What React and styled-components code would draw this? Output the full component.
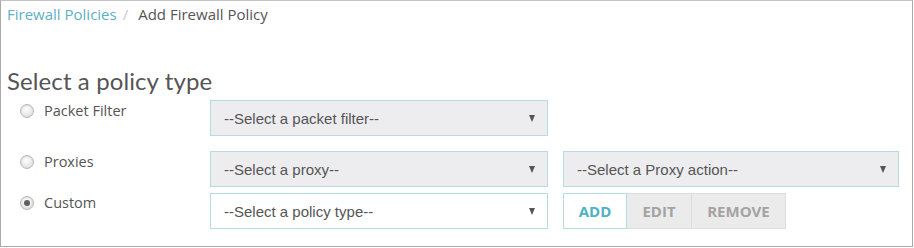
import styled, { createGlobalStyle } from 'styled-components'

const GlobalStyle = createGlobalStyle`
  html, body {
    margin: 0;
    background: #ffffff;
  }
  * {
    box-sizing: border-box;
  }
`

const Panel = styled.div`
  width: 913px;
  height: 247px;
  border: 1px solid #a9a9a9;
  border-top-color: #c4c4c4;
  padding: 3px 0 0 6px;
  background: #fff;
  font-family: 'Open Sans', 'Liberation Sans', sans-serif;
`

const Breadcrumb = styled.nav`
  display: flex;
  align-items: center;
  font-size: 15px;
  line-height: 21px;
  color: #555;
`

const Crumb = styled.a`
  color: #5eb0c4;
  text-decoration: none;
`

const Divider = styled.span`
  color: #c8c8c8;
  padding: 0 10px 0 6px;
`

const Heading = styled.h2`
  margin: 43px 0 0 0;
  font-family: 'Lato', 'Open Sans', sans-serif;
  font-weight: 400;
  font-size: 24px;
  line-height: 26px;
  color: #555;
  letter-spacing: 0.1px;
`

const Form = styled.div`
  display: flex;
  flex-direction: column;
  margin-top: 6px;
`

const Row = styled.div`
  display: grid;
  grid-template-columns: 188px 338px 336px;
  column-gap: 15px;
  margin-top: ${(p) => p.$gap || 0}px;
  height: 36px;
`

const Choice = styled.label`
  display: flex;
  align-items: center;
  gap: 10px;
  padding-left: 13px;
  height: 19px;
  margin-top: ${(p) => p.$offset ?? 1}px;
  font-size: 14.5px;
  color: #555;
`

const Radio = styled.span`
  position: relative;
  width: 14px;
  height: 14px;
  border-radius: 50%;
  border: 1px solid #b9b9b9;
  background: radial-gradient(circle at 45% 35%, #ffffff 0%, #e6e6e6 60%, #cfcfcf 100%);
  box-shadow: inset 0 1px 1px rgba(0, 0, 0, 0.08);
  &::after {
    content: '';
    display: ${(p) => (p.$checked ? 'block' : 'none')};
    position: absolute;
    top: 3px;
    left: 3px;
    width: 6px;
    height: 6px;
    border-radius: 50%;
    background: #5f5f5f;
  }
`

const Select = styled.div`
  display: flex;
  align-items: center;
  justify-content: space-between;
  height: 36px;
  padding: 0 12px 0 13px;
  border: 1px solid #b3dde3;
  background: ${(p) => (p.$light ? '#ffffff' : '#ededef')};
  font-family: 'Liberation Sans', Arial, sans-serif;
  font-size: 15px;
  color: #555;
`

const Caret = styled.span`
  width: 0;
  height: 0;
  border-left: 3.5px solid transparent;
  border-right: 3.5px solid transparent;
  border-top: 7px solid #555;
`

const ButtonGroup = styled.div`
  display: flex;
`

const Button = styled.button`
  width: ${(p) => p.$width}px;
  height: 36px;
  padding: 0;
  border: 1px solid ${(p) => (p.$active ? '#b3dde3' : '#dcdcdc')};
  border-left-width: ${(p) => (p.$first ? 1 : 0)}px;
  background: ${(p) => (p.$active ? '#ffffff' : '#ebebeb')};
  color: ${(p) => (p.$active ? '#4fb0c6' : '#a3a3a3')};
  font-family: 'Open Sans', 'Liberation Sans', sans-serif;
  font-weight: 700;
  font-size: 15px;
  cursor: pointer;
`

function App() {
  return (
    <>
      <GlobalStyle />
      <Panel>
        <Breadcrumb>
          <Crumb href="#">Firewall Policies</Crumb>
          <Divider>/</Divider>
          <span>Add Firewall Policy</span>
        </Breadcrumb>
        <Heading>Select a policy type</Heading>
        <Form>
          <Row>
            <Choice>
              <Radio />
              Packet Filter
            </Choice>
            <Select>
              --Select a packet filter--
              <Caret />
            </Select>
          </Row>
          <Row $gap={15}>
            <Choice>
              <Radio />
              Proxies
            </Choice>
            <Select>
              --Select a proxy--
              <Caret />
            </Select>
            <Select>
              --Select a Proxy action--
              <Caret />
            </Select>
          </Row>
          <Row $gap={6}>
            <Choice $offset={0}>
              <Radio $checked />
              Custom
            </Choice>
            <Select $light>
              --Select a policy type--
              <Caret />
            </Select>
            <ButtonGroup>
              <Button $active $first $width={64}>ADD</Button>
              <Button $width={65}>EDIT</Button>
              <Button $width={94}>REMOVE</Button>
            </ButtonGroup>
          </Row>
        </Form>
      </Panel>
    </>
  )
}

export default App
